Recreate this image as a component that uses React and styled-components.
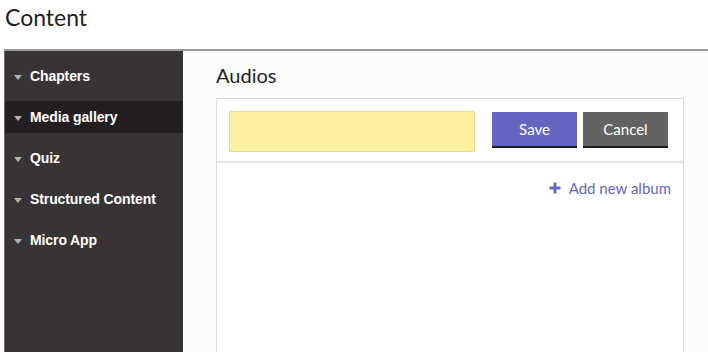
import styled, { createGlobalStyle } from "styled-components";

const Global = createGlobalStyle`
  body {
    margin: 0;
    background: #ffffff;
    font-family: Lato, "Open Sans", sans-serif;
  }
`;

const Page = styled.div`
  width: 708px;
`;

const Heading = styled.h1`
  margin: 0;
  padding: 3px 0 0 5px;
  height: 45px;
  box-sizing: border-box;
  font-size: 23px;
  font-weight: 400;
  color: #1f1f1f;
`;

const Panel = styled.div`
  display: flex;
  margin-left: 4px;
  height: 301px;
  border-top: 2px solid #9a9a9a;
  margin-top: 4px;
`;

const Sidebar = styled.nav`
  width: 179px;
  background: #383435;
  border-left: 1px solid #6a6668;
  padding-top: 9px;
  box-sizing: border-box;
`;

const NavItem = styled.div`
  display: flex;
  align-items: center;
  height: 32px;
  margin-bottom: 9px;
  padding-left: 9px;
  background: ${(p) => (p.$active ? "#231f20" : "transparent")};
  color: #ffffff;
  font-family: "Liberation Sans", Arial, sans-serif;
  font-weight: 700;
  font-size: 14px;
  letter-spacing: -0.1px;
`;

const Caret = styled.span`
  width: 0;
  height: 0;
  margin-right: 8px;
  margin-top: 2px;
  border-left: 4px solid transparent;
  border-right: 4px solid transparent;
  border-top: 5px solid #b5b2b3;
`;

const Main = styled.main`
  flex: 1;
  background: #fcfcfc;
  padding: 0 24px 0 33px;
  display: flex;
  flex-direction: column;
`;

const SectionTitle = styled.h2`
  margin: 0;
  height: 47px;
  padding-top: 12px;
  box-sizing: border-box;
  font-size: 20px;
  line-height: 24px;
  font-weight: 400;
  color: #1f1f1f;
`;

const Card = styled.div`
  flex: 1;
  background: #ffffff;
  border: 1px solid #dcdcdc;
  border-bottom: none;
`;

const FormRow = styled.div`
  display: flex;
  align-items: center;
  height: 62px;
  padding: 0 13px 0 12px;
  border-bottom: 2px solid #e6e6e6;
`;

const NameInput = styled.input`
  width: 246px;
  height: 41px;
  margin-top: 2px;
  box-sizing: border-box;
  background: #fbf0a0;
  border: 1px solid #e3dca4;
  outline: none;
  margin-right: 17px;
`;

const Button = styled.button`
  width: ${(p) => p.$w}px;
  height: 36px;
  margin-left: ${(p) => p.$gap}px;
  border: none;
  border-bottom: 2px solid #1d1d1d;
  background: ${(p) => p.$bg};
  color: #ffffff;
  font-family: Lato, "Open Sans", sans-serif;
  font-size: 15px;
  cursor: pointer;
`;

const Actions = styled.div`
  display: flex;
  justify-content: flex-end;
  padding: 16px 12px 0 0;
`;

const AddLink = styled.a`
  display: flex;
  align-items: center;
  gap: 8px;
  color: #6566c4;
  font-size: 15px;
  cursor: pointer;
`;

const Plus = () => (
  <svg width="12" height="12" viewBox="0 0 12 12">
    <path d="M6 0.5v11M0.5 6h11" stroke="#6566c4" strokeWidth="2.8" />
  </svg>
);

const items = ["Chapters", "Media gallery", "Quiz", "Structured Content", "Micro App"];

export default function App() {
  return (
    <Page>
      <Global />
      <Heading>Content</Heading>
      <Panel>
        <Sidebar>
          {items.map((item) => (
            <NavItem key={item} $active={item === "Media gallery"}>
              <Caret />
              {item}
            </NavItem>
          ))}
        </Sidebar>
        <Main>
          <SectionTitle>Audios</SectionTitle>
          <Card>
            <FormRow>
              <NameInput />
              <Button $w={85} $gap={0} $bg="#6566c4">Save</Button>
              <Button $w={85} $gap={6} $bg="#636363">Cancel</Button>
            </FormRow>
            <Actions>
              <AddLink>
                <Plus />
                Add new album
              </AddLink>
            </Actions>
          </Card>
        </Main>
      </Panel>
    </Page>
  );
}
